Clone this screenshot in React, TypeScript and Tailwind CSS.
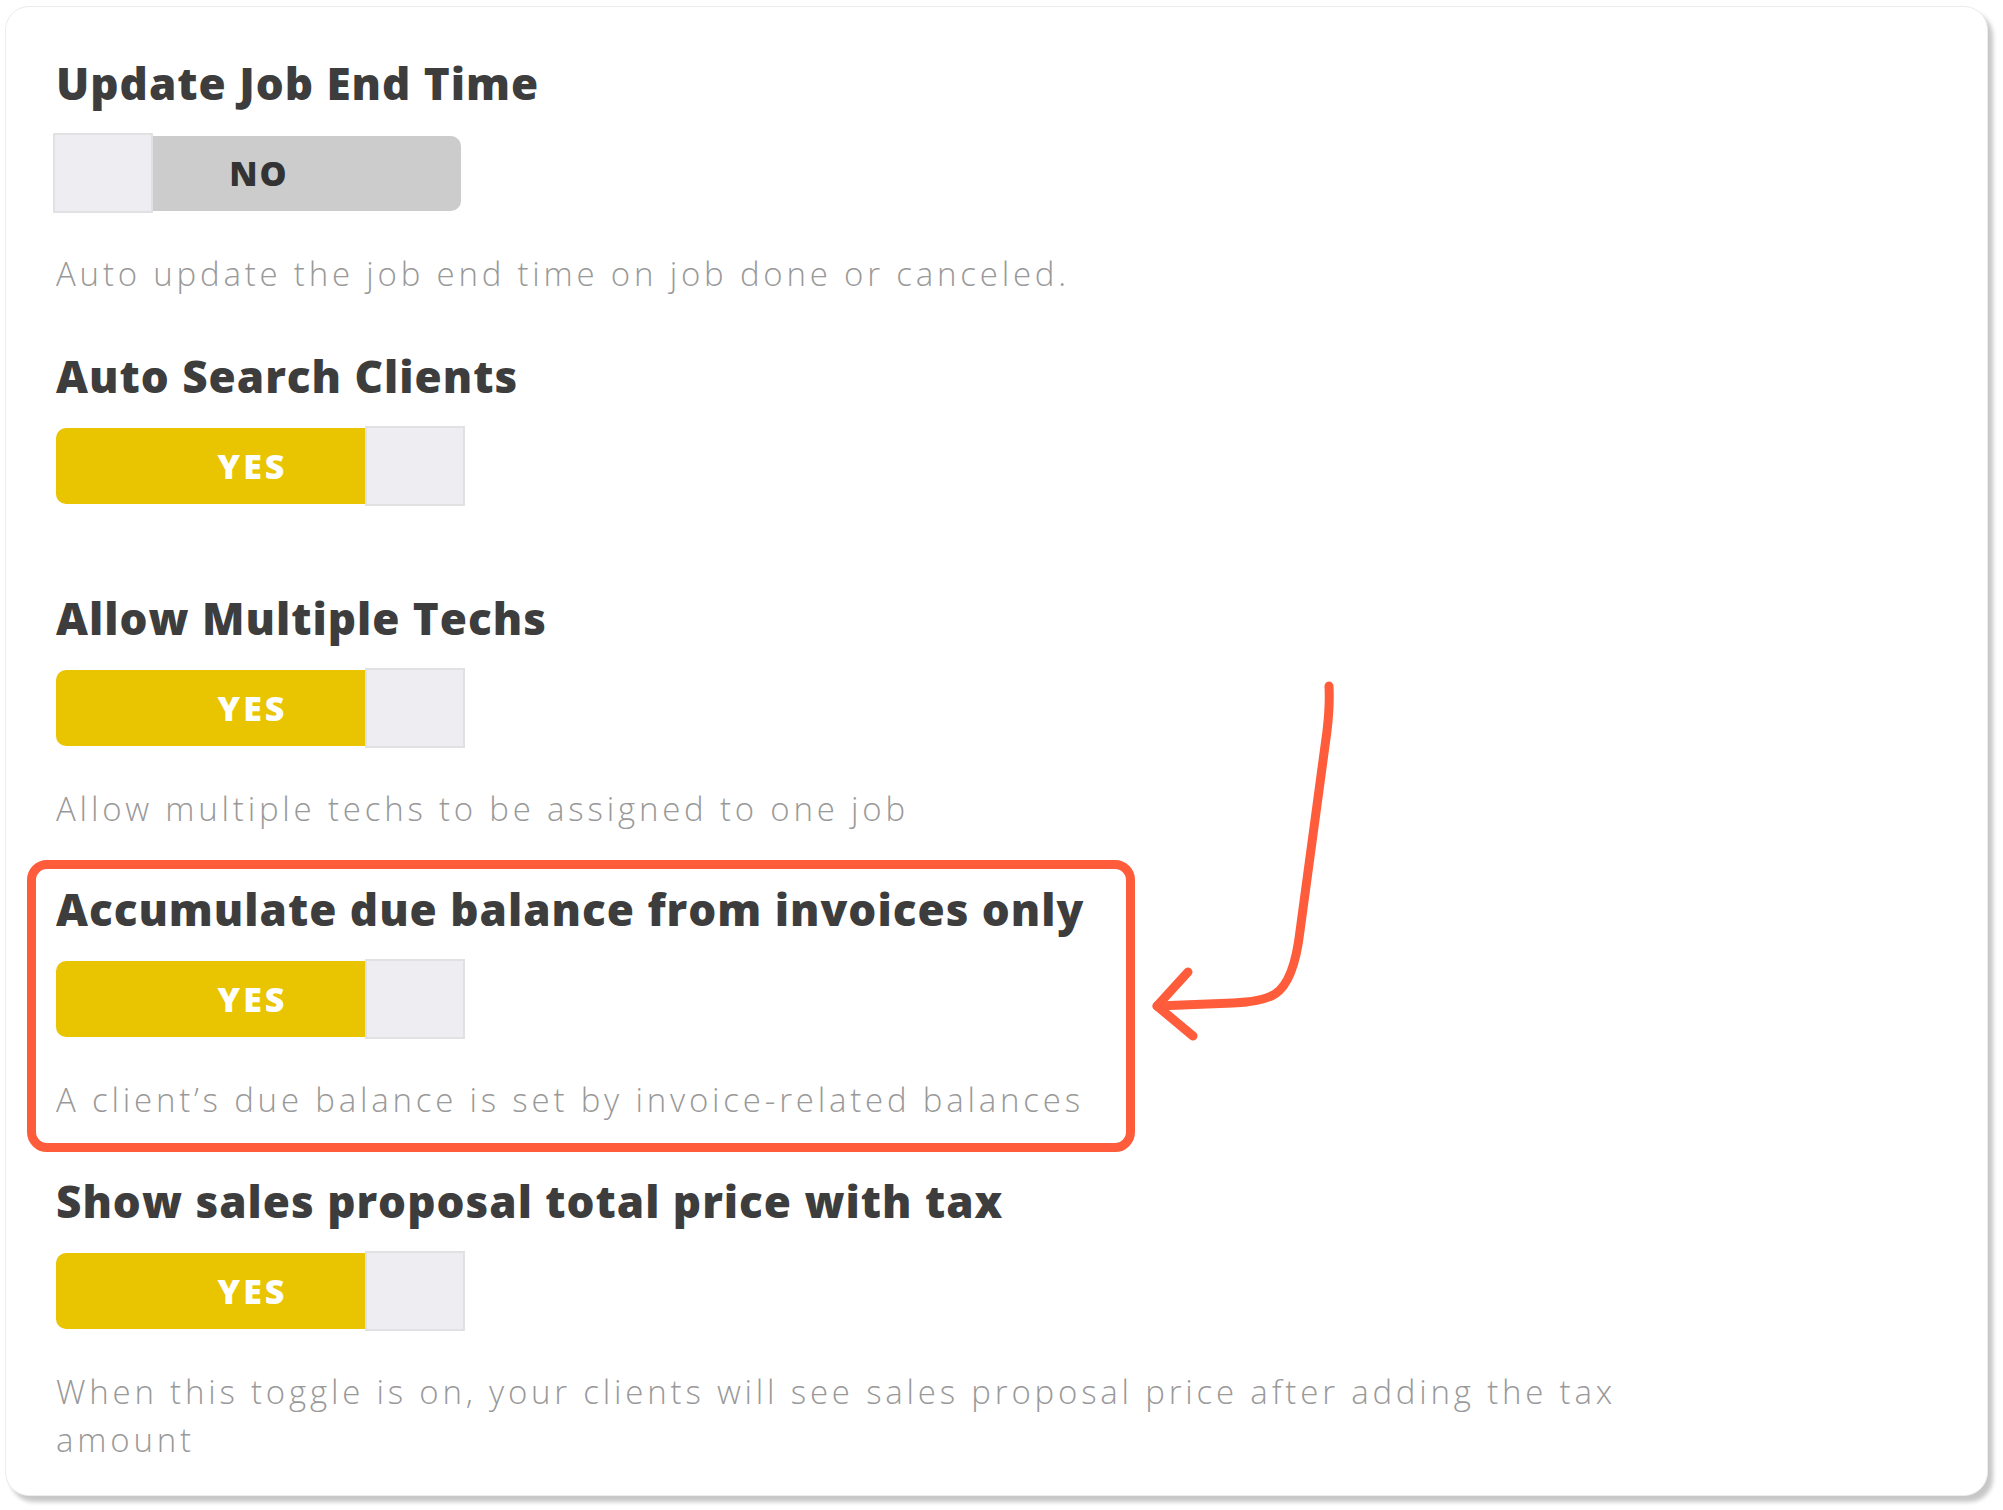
import React from 'react';

type ToggleProps = { on: boolean };

function Toggle({ on }: ToggleProps): JSX.Element {
  if (!on) {
    return (
      <div className="ml-[-3px] flex h-[80px] w-[408px] items-center">
        <div className="h-[80px] w-[100px] border-2 border-[#e1e1e4] bg-[#eeeef2]" />
        <div className="flex h-[75px] flex-1 items-center justify-center rounded-r-[10px] bg-[#cccccc] pr-[96px] text-[34px] font-extrabold tracking-[2px] text-[#333333]">
          NO
        </div>
      </div>
    );
  }
  return (
    <div className="flex h-[80px] w-[409px] items-center">
      <div className="flex h-[76px] w-[309px] items-center justify-center rounded-l-[10px] bg-[#e9c400] pl-[84px] text-[34px] font-extrabold tracking-[3px] text-white">
        YES
      </div>
      <div className="h-[80px] w-[100px] border-2 border-[#e1e1e4] bg-[#eeeef2]" />
    </div>
  );
}

type SettingProps = {
  title: string;
  on: boolean;
  desc?: string;
  className?: string;
  children?: React.ReactNode;
};

function Setting({ title, on, desc, className, children }: SettingProps): JSX.Element {
  return (
    <section className={`relative ${className ?? ''}`}>
      <h2 className="h-[44px] text-[44px] leading-[44px] font-extrabold tracking-[1px] text-[#3d3d3d]">{title}</h2>
      <div className="mt-[28px]">
        <Toggle on={on} />
      </div>
      {desc && (
        <p className="mt-[37px] max-w-[1640px] text-[33px] leading-[48px] font-light tracking-[3.8px] text-[#999999]">
          {desc}
        </p>
      )}
      {children}
    </section>
  );
}

export default function App(): JSX.Element {
  return (
    <div className="min-h-screen w-[2003px] bg-white pl-[5px] pt-[6px]" style={{ fontFamily: '"Open Sans", "Noto Sans", sans-serif' }}>
      <div className="h-[1490px] w-[1983px] rounded-[24px] border border-[#ececec] bg-white pl-[50px] pt-[54px] shadow-[5px_6px_4px_rgba(0,0,0,0.22)]">
        <Setting title="Update Job End Time" on={false} desc="Auto update the job end time on job done or canceled." />
        <Setting className="mt-[56px]" title="Auto Search Clients" on />
        <Setting className="mt-[90px]" title="Allow Multiple Techs" on desc="Allow multiple techs to be assigned to one job" />
        <Setting
          className="mt-[54px]"
          title="Accumulate due balance from invoices only"
          on
          desc="A client’s due balance is set by invoice-related balances"
        >
          <div className="pointer-events-none absolute left-[-29px] top-[-27px] h-[292px] w-[1108px] rounded-[20px] border-[9px] border-[#fe5c3a]" />
          <svg
            className="pointer-events-none absolute left-[1084px] top-[-211px]"
            width="205"
            height="370"
            viewBox="0 0 205 370"
            fill="none"
            stroke="#fe5c3a"
            strokeWidth="9"
            strokeLinecap="round"
            strokeLinejoin="round"
          >
            <path d="M189 10 Q190 30 187 55 L160 255 Q154 306 135 318 Q122 326 93 327 L17 330" />
            <path d="M48 296 L17 330 L53 360" />
          </svg>
        </Setting>
        <Setting
          className="mt-[55px]"
          title="Show sales proposal total price with tax"
          on
          desc="When this toggle is on, your clients will see sales proposal price after adding the tax amount"
        />
      </div>
    </div>
  );
}
